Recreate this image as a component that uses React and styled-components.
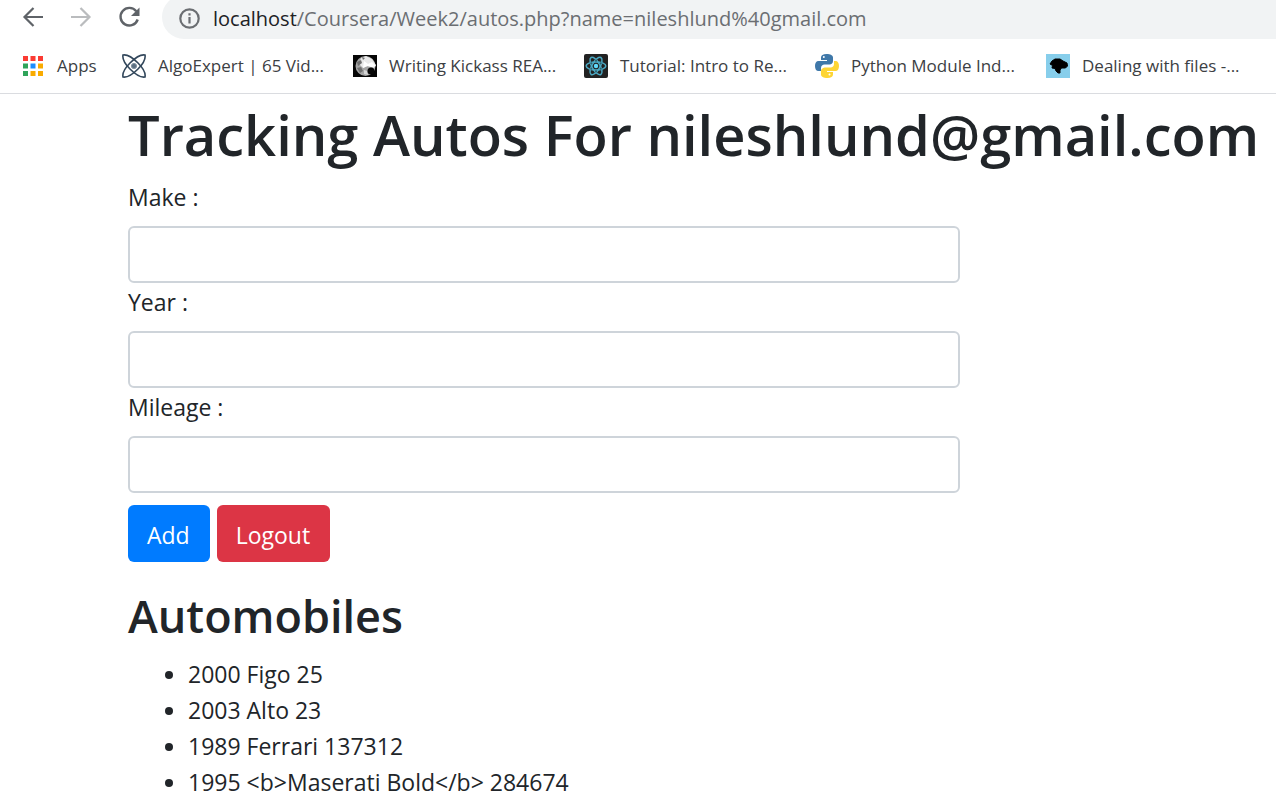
import React from "react";
import styled, { createGlobalStyle } from "styled-components";

const GlobalStyle = createGlobalStyle`
  *, *::before, *::after { box-sizing: border-box; }
  body {
    margin: 0;
    background: #fff;
    color: #212529;
    font-family: "Segoe UI", "Open Sans", "Noto Sans", sans-serif;
    font-size: 23px;
    line-height: 36px;
    overflow-x: hidden;
  }
`;

const BrowserBar = styled.header`
  border-bottom: 1px solid #dadce0;
`;

const Toolbar = styled.div`
  display: flex;
  align-items: flex-end;
  height: 39px;
  padding-left: 20px;
  overflow: hidden;
`;

const NavButtons = styled.nav`
  display: flex;
  gap: 22px;
  flex: none;
  width: 142px;
  padding-bottom: 9px;
`;

const IconButton = styled.button`
  display: block;
  flex: none;
  width: 26px;
  height: 26px;
  padding: 0;
  border: 0;
  background: none;
  color: ${(p) => (p.disabled ? "#babcbe" : "#5f6368")};
`;

const AddressBar = styled.div`
  display: flex;
  align-items: center;
  gap: 12px;
  flex: 1;
  height: 44px;
  padding: 2px 0 0 16px;
  border-radius: 22px 0 0 22px;
  background: #f1f3f4;
  color: #6b6e72;
  font-size: 20px;
  white-space: nowrap;
`;

const Url = styled.span`
  padding-top: 1px;
`;

const Host = styled.span`
  color: #202124;
`;

const Bookmarks = styled.nav`
  display: flex;
  align-items: center;
  height: 54px;
  padding-left: 21px;
  overflow: hidden;
`;

const Bookmark = styled.a`
  display: flex;
  align-items: center;
  gap: 12px;
  flex: none;
  width: ${(p) => (p.$short ? "101px" : "231px")};
  color: #3c4043;
  font-size: 17px;
  line-height: 24px;
  text-decoration: none;
  white-space: nowrap;

  svg { flex: none; }
`;

const Page = styled.main`
  padding: 0 0 8px 128px;
`;

const Title = styled.h1`
  margin: 0;
  padding: 4px 0 8px;
  font-size: 56px;
  font-weight: 600;
  line-height: 72px;
  white-space: nowrap;
`;

const Subtitle = styled.h2`
  margin: 24px 0 12px;
  padding-top: 1px;
  font-size: 45px;
  font-weight: 600;
  line-height: 57px;
`;

const Form = styled.form`
  max-width: 832px;
`;

const Field = styled.div`
  display: flex;
  flex-direction: column;
`;

const Label = styled.label`
  padding: 1px 0 11px;
`;

const TextInput = styled.input`
  width: 100%;
  height: 57px;
  padding: 9px 18px;
  border: 2px solid #ced4da;
  border-radius: 6px;
  background: #fff;
  color: #495057;
  font: inherit;
`;

const Actions = styled.div`
  display: flex;
  gap: 7px;
  margin-top: 12px;
`;

const Button = styled.button`
  height: 57px;
  padding: 3px 20px 0 19px;
  border: 0;
  border-radius: 6px;
  background: ${(p) => (p.$danger ? "#dc3545" : "#007bff")};
  color: #fff;
  font: inherit;
`;

const AutoList = styled.ul`
  margin: 0;
  padding-left: 60px;
`;

const stroke = { fill: "none", stroke: "currentColor", strokeWidth: 2.2 };

const BackIcon = () => (
  <svg width="26" height="26" viewBox="0 0 26 26" {...stroke}>
    <path d="M23 13H4.5M13.5 4L4.5 13l9 9" />
  </svg>
);

const ForwardIcon = () => (
  <svg width="26" height="26" viewBox="0 0 26 26" {...stroke}>
    <path d="M3 13h18.500M12.500 4l9 9-9 9" />
  </svg>
);

const ReloadIcon = () => (
  <svg width="26" height="26" viewBox="0 0 26 26" {...stroke}>
    <path d="M20.300 7.300A8.800 8.800 0 1 0 21.700 15.500" strokeWidth="2.400" />
    <path d="M23.500 3.500v8.500H15z" fill="currentColor" stroke="none" />
  </svg>
);

const InfoIcon = () => (
  <svg width="23" height="23" viewBox="0 0 23 23" {...stroke}>
    <circle cx="11.500" cy="11.500" r="9.200" />
    <path d="M11.500 10v6.500M11.500 6.200v2.300" />
  </svg>
);

const APP_COLORS = [
  "#fb3b33", "#fb3b33", "#fb3b33",
  "#2fa45a", "#1a8cff", "#f9ab00",
  "#2fa45a", "#f9ab00", "#f9ab00",
];

const AppsIcon = () => (
  <svg width="24" height="24" viewBox="0 0 24 24">
    {APP_COLORS.map((c, i) => (
      <rect key={i} x={2 + (i % 3) * 7.5} y={2 + Math.floor(i / 3) * 7.5} width="5" height="5" fill={c} />
    ))}
  </svg>
);

const AlgoIcon = () => (
  <svg width="24" height="24" viewBox="0 0 24 24" fill="none" stroke="#32475b" strokeWidth="1.600">
    <path d="M1 1c5-1 11 4 15 8s8 9 7 14c-5 1-11-4-15-8S0 6 1 1z" />
    <path d="M23 1c-5-1-11 4-15 8S0 18 1 23c5 1 11-4 15-8s8-9 7-14z" />
    <circle cx="12" cy="12" r="2.600" fill="#5c7083" stroke="#8393a1" strokeWidth="1" />
  </svg>
);

const MoonIcon = () => (
  <svg width="24" height="24" viewBox="0 0 24 24">
    <rect y="1" width="24" height="22" fill="#050505" />
    <circle cx="12.500" cy="12" r="10" fill="#a5a5a5" />
    <path d="M8 4l5-2 6 3 4 6-2 3-6-2-5 2-4-4z" fill="#e9e9e9" />
    <path d="M11 7l4 3 4-2 4 4-4 1-5-1-4 2z" fill="#fff" />
    <path d="M4 8l4-2 1 3-4 3zM4 14l4-1 2 4-3 2zM9 3l3 1-2 2z" fill="#6f6f6f" />
    <path d="M11 16l3 1 1 4-4-1z" fill="#d5d5d5" />
    <ellipse cx="18" cy="17" rx="3.500" ry="3.500" fill="#080808" />
  </svg>
);

const REACT_NODES = [30, 90, 150, 210, 270, 330];

const ReactIcon = () => (
  <svg width="24" height="24" viewBox="0 0 24 24">
    <rect width="24" height="24" rx="2" fill="#222" />
    <g fill="none" stroke="#4ba9c3" strokeWidth="1.500">
      {[0, 60, 120].map((a) => (
        <ellipse key={a} cx="12" cy="12" rx="9.800" ry="4" transform={`rotate(${a} 12 12)`} />
      ))}
    </g>
    {REACT_NODES.map((a) => (
      <circle key={a} cx="17.500" cy="12" r="1" fill="#2b6070" transform={`rotate(${a} 12 12)`} />
    ))}
    <circle cx="12" cy="12" r="2.200" fill="#61dafb" />
  </svg>
);

const PythonIcon = () => (
  <svg width="24" height="24" viewBox="0 0 24 24">
    <path d="M11.500 0C8 0 6 1.200 6 3.500V6h6v1H3.500C1.200 7 0 9 0 12s1.200 5 3.500 5H6v-3c0-2 1.500-3.500 3.500-3.500h5C16.500 10.500 18 9 18 7V3.500C18 1.200 15.500 0 11.500 0z" fill="#3f78a9" />
    <path d="M12.500 24c3.500 0 5.500-1.200 5.500-3.500V18h-6v-1h8.500c2.300 0 3.500-2 3.500-5s-1.200-5-3.500-5H19v3c0 2-1.500 3.500-3.500 3.500h-5C8.500 13.500 6 15 6 17v3.500C6 22.800 8.500 24 12.500 24z" fill="#fdd535" />
    <circle cx="8.800" cy="3" r="1" fill="#fff" />
    <circle cx="14.500" cy="20.500" r="1" fill="#fff" />
  </svg>
);

const FilesIcon = () => (
  <svg width="24" height="24" viewBox="0 0 24 24">
    <rect width="24" height="24" fill="#87ceeb" />
    <path d="M4 10l2-3 3-2h5l3 2 4 2 .5 3-2 2h-4l-1.500 2v3h-2L10 17l-1-2.500-3-.5.500-2.500z" fill="#000" stroke="#000" strokeLinejoin="round" />
  </svg>
);

const BOOKMARKS = [
  { label: "Apps", Icon: AppsIcon, short: true },
  { label: "AlgoExpert | 65 Vid...", Icon: AlgoIcon },
  { label: "Writing Kickass REA...", Icon: MoonIcon },
  { label: "Tutorial: Intro to Re...", Icon: ReactIcon },
  { label: "Python Module Ind...", Icon: PythonIcon },
  { label: "Dealing with files -...", Icon: FilesIcon },
];

const FIELDS = [
  { id: "make", label: "Make :" },
  { id: "year", label: "Year :" },
  { id: "mileage", label: "Mileage :" },
];

const AUTOS = [
  "2000 Figo 25",
  "2003 Alto 23",
  "1989 Ferrari 137312",
  "1995 <b>Maserati Bold</b> 284674",
];

export default function App() {
  return (
    <>
      <GlobalStyle />
      <BrowserBar>
        <Toolbar>
          <NavButtons>
            <IconButton aria-label="Back"><BackIcon /></IconButton>
            <IconButton aria-label="Forward" disabled><ForwardIcon /></IconButton>
            <IconButton aria-label="Reload"><ReloadIcon /></IconButton>
          </NavButtons>
          <AddressBar>
            <InfoIcon />
            <Url>
              <Host>localhost</Host>/Coursera/Week2/autos.php?name=nileshlund%40gmail.com
            </Url>
          </AddressBar>
        </Toolbar>
        <Bookmarks>
          {BOOKMARKS.map(({ label, Icon, short }) => (
            <Bookmark key={label} href="#" $short={short}>
              <Icon />
              {label}
            </Bookmark>
          ))}
        </Bookmarks>
      </BrowserBar>
      <Page>
        <Title>Tracking Autos For nileshlund@gmail.com</Title>
        <Form onSubmit={(e) => e.preventDefault()}>
          {FIELDS.map(({ id, label }) => (
            <Field key={id}>
              <Label htmlFor={id}>{label}</Label>
              <TextInput id={id} name={id} type="text" />
            </Field>
          ))}
          <Actions>
            <Button type="submit">Add</Button>
            <Button type="button" $danger>Logout</Button>
          </Actions>
        </Form>
        <Subtitle>Automobiles</Subtitle>
        <AutoList>
          {AUTOS.map((auto) => (
            <li key={auto}>{auto}</li>
          ))}
        </AutoList>
      </Page>
    </>
  );
}
